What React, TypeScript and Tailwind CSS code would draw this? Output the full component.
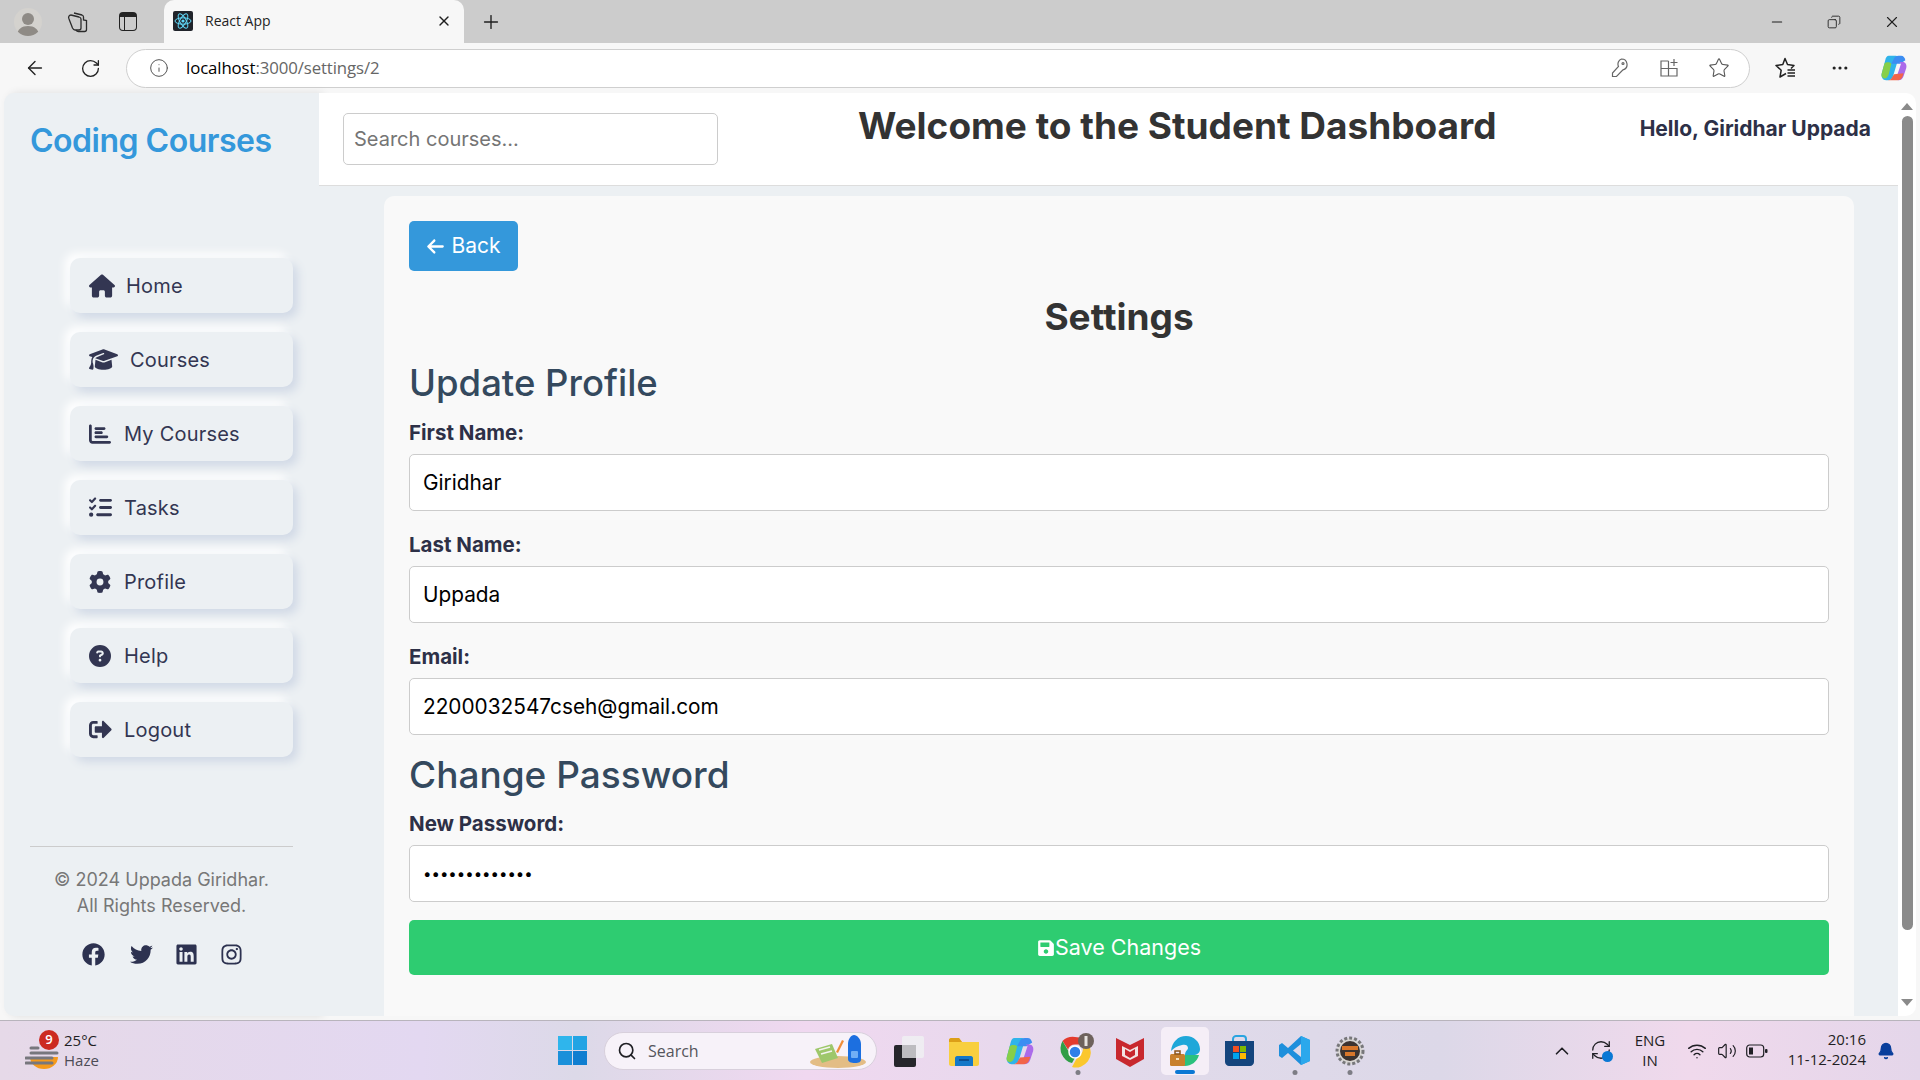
import type { ReactNode } from 'react';
import { ArrowLeft, RotateCw, Info, Star, Plus, X, Minus, Copy, Search, ChevronUp, Wifi, Volume2, Bell, MoreHorizontal, RefreshCw } from 'lucide-react';
import { FaFacebook, FaTwitter, FaLinkedin, FaInstagram, FaSave, FaSignOutAlt } from 'react-icons/fa';
import { FaArrowLeft, FaChartBar, FaCircleQuestion, FaGear, FaGraduationCap, FaHouse, FaListCheck } from 'react-icons/fa6';

const navItems = [
  { label: 'Home', icon: <FaHouse size={26} />, gap: 'gap-[11px]' },
  { label: 'Courses', icon: <FaGraduationCap size={29} />, gap: 'gap-[12px]' },
  { label: 'My Courses', icon: <FaChartBar size={22} />, gap: 'gap-[13px]' },
  { label: 'Tasks', icon: <FaListCheck size={23} />, gap: 'gap-[12px]' },
  { label: 'Profile', icon: <FaGear size={22} />, gap: 'gap-[13px]' },
  { label: 'Help', icon: <FaCircleQuestion size={22} />, gap: 'gap-[13px]' },
  { label: 'Logout', icon: <FaSignOutAlt size={23} />, gap: 'gap-[12px]' },
];

const ReactFavicon = () => (
  <svg width="20" height="20" viewBox="0 0 20 20">
    <rect width="20" height="20" rx="2" fill="#20232a" />
    <g fill="none" stroke="#61dafb" strokeWidth="1">
      <ellipse cx="10" cy="10" rx="8" ry="3.2" />
      <ellipse cx="10" cy="10" rx="8" ry="3.2" transform="rotate(60 10 10)" />
      <ellipse cx="10" cy="10" rx="8" ry="3.2" transform="rotate(120 10 10)" />
    </g>
    <circle cx="10" cy="10" r="1.6" fill="#61dafb" />
  </svg>
);

const CopilotLogo = ({ size }: { size: number }) => (
  <svg width={size} height={size} viewBox="0 0 32 32">
    <path d="M10 2h8c2 0 3 1 3 3l-6 20c-1 3-3 5-6 5H7c-4 0-6-4-5-8l4-15c.6-3 2-5 4-5z" fill="#2fb4ea" />
    <path d="M2 22l3-11c2-2 6-2 8 0l-3 12c-1 3-3 5-5 5-3-1-4-3-3-6z" fill="#86cf4a" />
    <path d="M13 11l3-6c1-2 3-3 5-3h3c3 0 4 2 5 5l-6 4z" fill="#3c8df2" />
    <path d="M22 9h4c3 0 5 3 4 7l-3 9c-1 3-3 5-6 5l-3-1 6-18z" fill="#ab6bea" />
    <path d="M9 30h11c3 0 5-2 6-5l1-3-11 1-3 5c-1 1-2 2-4 2z" fill="#f2654a" />
  </svg>
);

const Field = ({ label, value, type = 'text', top }: { label: string; value: string; type?: string; top: string }) => (
  <div className={top}>
    <label className="block text-[20.5px] leading-[24px] font-bold text-[#2d3047]">{label}</label>
    <input
      readOnly
      type={type}
      value={value}
      className={`mt-[9px] block h-[57px] w-full rounded-[5px] border border-[#cccccc] bg-white px-[13px] text-black outline-none ${type === 'password' ? 'text-[15px]' : 'text-[20.8px]'}`}
    />
  </div>
);

const TaskIcon = ({ children, width, dot }: { children: ReactNode; width: string; dot?: boolean }) => (
  <div className={`relative flex h-[59px] items-center justify-center ${width}`}>
    {children}
    {dot && <span className="absolute bottom-[5px] left-1/2 h-[5px] w-[5px] -translate-x-1/2 rounded-full bg-[#7d7d85]" />}
  </div>
);

const Taskbar = () => (
  <footer className="flex h-[60px] shrink-0 items-center border-t border-[#b8b4bc] bg-[linear-gradient(90deg,#e6d9e8,#e3d8f1_22%,#dcd9e8_30%,#f0d8f0_42%,#e0daea_62%,#dcd8e8_75%,#f0d9ec_88%,#e4d6ea)] font-['Open_Sans',sans-serif]">
    <div className="flex w-[558px] shrink-0 items-center pl-[25px]">
      <div className="relative h-[44px] w-[39px]">
        <svg width="40" height="44" viewBox="0 0 40 44" className="absolute left-0 top-0">
          <path d="M5 28h28a14 12 0 0 1-28 0z" fill="#f59a1c" />
          <path d="M6 15h7M6 20h26M1 25h26M1 30h26" stroke="#77777d" strokeWidth="3" strokeLinecap="round" transform="translate(0 4)" />
        </svg>
        <span className="absolute left-[14px] top-[1px] flex h-[20px] w-[20px] items-center justify-center rounded-full bg-[#cc2a20] text-[13px] font-semibold text-white">9</span>
      </div>
      <div className="-mt-[2px] text-[15px] leading-[20px] text-[#1f1f24]">
        <div>25°C</div>
        <div className="text-[#4c4c55]">Haze</div>
      </div>
    </div>

    <div className="flex items-center">
      <TaskIcon width="w-[29px]">
        <svg width="29" height="29" viewBox="0 0 29 29">
          <rect width="14" height="14" fill="#2fb5ec" />
          <rect x="15" width="14" height="14" fill="#22a4e4" />
          <rect y="15" width="14" height="14" fill="#1a90da" />
          <rect x="15" y="15" width="14" height="14" fill="#0f7ed0" />
        </svg>
      </TaskIcon>
      <div className="ml-[17px] flex h-[38px] w-[273px] items-center rounded-full border border-[#d8d0dc] bg-[#f7f2f9] pl-[12px] pr-[4px]">
        <Search size={20} strokeWidth={2} className="text-[#1f1f24]" />
        <span className="ml-[11px] text-[16px] text-[#55555c]">Search</span>
        <svg width="62" height="38" viewBox="0 0 62 38" className="ml-auto">
          <ellipse cx="28" cy="30" rx="28" ry="6" fill="#e3bd85" />
          <path d="M5 17l17-5 6 14-16 5z" fill="#9ec76b" />
          <path d="M9 18l11-3M11 22l11-3" stroke="#f4f4f0" strokeWidth="1.5" />
          <path d="M26 20l6-12 2 1-6 12z" fill="#ef8d3a" />
          <path d="M38 12c0-5 3-9 6-9s7 4 7 9v15c0 3-2 4-6 4s-7-1-7-4z" fill="#1c6fe0" />
          <rect x="41" y="19" width="7" height="7" rx="1" fill="#71aef5" />
        </svg>
      </div>
      <TaskIcon width="w-[32px] ml-[16px]">
        <svg width="32" height="32" viewBox="0 0 32 32">
          <rect x="1" y="10" width="22" height="22" rx="2" fill="#26262b" />
          <rect x="9" y="1" width="22" height="22" rx="2" fill="#f0eef2" opacity="0.9" />
          <rect x="9" y="10" width="14" height="13" fill="#bdbcc0" />
        </svg>
      </TaskIcon>
      <TaskIcon width="w-[32px] ml-[23px]">
        <svg width="32" height="30" viewBox="0 0 32 30">
          <path d="M1 4c0-1 1-2 2-2h8l3 4h17v22c0 1-1 2-2 2H3c-1 0-2-1-2-2z" fill="#f8cf3f" />
          <path d="M1 4c0-1 1-2 2-2h8l3 4H1z" fill="#dc9f18" />
          <path d="M9 20h14c1 0 2 1 2 2v8H7v-8c0-1 1-2 2-2z" fill="#1478c8" />
          <rect x="11" y="23" width="10" height="2" fill="#0c4f90" />
        </svg>
      </TaskIcon>
      <TaskIcon width="w-[30px] ml-[25px]">
        <CopilotLogo size={30} />
      </TaskIcon>
      <TaskIcon width="w-[37px] ml-[24px]" dot>
        <svg width="37" height="36" viewBox="0 0 37 36">
          <path d="M16 4a15 15 0 0 1 13 7.500H16a7.500 7.500 0 0 0-7 5L3.500 8A15 15 0 0 1 16 4z" fill="#e33b2e" />
          <path d="M3.500 8l6.500 11a7.500 7.500 0 0 0 7 4l-4 7A15 15 0 0 1 3.500 8z" fill="#2f9e46" />
          <path d="M29.500 11.500A15 15 0 0 1 13 34l6-11a7.500 7.500 0 0 0 3.500-11.500z" fill="#fbc72d" />
          <circle cx="16" cy="19" r="6" fill="#2f7fe8" stroke="#fff" strokeWidth="1.500" />
          <circle cx="27" cy="8" r="8" fill="#6e625c" />
          <path d="M27 3v10" stroke="#e8e3df" strokeWidth="3" />
        </svg>
      </TaskIcon>
      <TaskIcon width="w-[28px] ml-[20px]">
        <svg width="28" height="32" viewBox="0 0 28 32">
          <path d="M0 3l14 7 14-7v21l-14 8-14-8z" fill="#c8282e" />
          <path d="M6 11l8 4 8-4v10l-8 4-8-4z" fill="#f2e4e4" />
          <path d="M9 14l5 3 5-3v6l-5 3-5-3z" fill="#c8282e" />
        </svg>
      </TaskIcon>
      <div className="relative ml-[17px] flex h-[48px] w-[48px] items-center justify-center rounded-[5px] bg-[#f5eef7]">
        <svg width="32" height="32" viewBox="0 0 32 32">
          <path d="M2 16C3 7 9 1 17 1c8 0 14 6 14 13 0 4-3 6-7 6h-8c0-4 3-5 3-7 0-3-3-4-6-3-5 1-8 3-11 6z" fill="#1fa7d9" />
          <path d="M16 20h14c-2 7-8 11-14 11-2 0-4-1-5-2 3 0 5-4 5-9z" fill="#2bc17d" />
          <rect x="1" y="19" width="15" height="12" rx="1.500" fill="#c8802c" />
          <rect x="6" y="16" width="5" height="3" fill="none" stroke="#8a5418" strokeWidth="1.500" />
          <rect x="7" y="23" width="3" height="2" fill="#f4e2bf" />
        </svg>
        <span className="absolute bottom-[1px] left-1/2 h-[4px] w-[20px] -translate-x-1/2 rounded-full bg-[#0a78d4]" />
      </div>
      <TaskIcon width="w-[29px] ml-[16px]">
        <svg width="29" height="31" viewBox="0 0 29 31">
          <path d="M8 6V4c0-2 2-3 3-3h7c2 0 3 1 3 3v2" fill="none" stroke="#2aa4e0" strokeWidth="2" />
          <path d="M0 6h29v21c0 2-2 4-4 4H4c-2 0-4-2-4-4z" fill="#14457d" />
          <rect x="8" y="11" width="6" height="6" fill="#f25022" />
          <rect x="15" y="11" width="6" height="6" fill="#7fba00" />
          <rect x="8" y="18" width="6" height="6" fill="#00a4ef" />
          <rect x="15" y="18" width="6" height="6" fill="#ffb900" />
        </svg>
      </TaskIcon>
      <TaskIcon width="w-[31px] ml-[25px]" dot>
        <svg width="31" height="31" viewBox="0 0 31 31">
          <path d="M22 1l9 4v21l-9 4-13-12-6 5-3-2V10l3-2 6 5zM22 9l-8 6.500 8 6.500z" fill="#1e8fdc" />
          <path d="M22 1l9 4v21l-9 4z" fill="#2ba8ec" />
        </svg>
      </TaskIcon>
      <TaskIcon width="w-[30px] ml-[25px]" dot>
        <svg width="30" height="30" viewBox="0 0 30 30">
          <circle cx="15" cy="15" r="13" fill="#d8d6d4" stroke="#77777a" strokeWidth="3" strokeDasharray="3 2" />
          <circle cx="15" cy="15" r="10" fill="#3d3430" />
          <rect x="7" y="10" width="16" height="4" fill="#d8772a" />
          <rect x="10" y="16" width="10" height="4" fill="#d8772a" />
        </svg>
      </TaskIcon>
    </div>

    <div className="ml-auto flex items-center pr-[25px] text-[#1f1f24]">
      <ChevronUp size={22} strokeWidth={1.800} />
      <div className="relative ml-[17px] h-[24px] w-[22px]">
        <RefreshCw size={22} strokeWidth={1.400} />
        <span className="absolute bottom-[1px] right-[-1px] h-[11px] w-[11px] rounded-full bg-[#0a78d4]" />
      </div>
      <div className="-mt-[2px] ml-[20px] w-[36px] text-center text-[15px] leading-[20px]">
        <div>ENG</div>
        <div>IN</div>
      </div>
      <Wifi size={20} strokeWidth={1.700} className="ml-[19px]" />
      <Volume2 size={20} strokeWidth={1.400} className="ml-[10px]" />
      <svg width="22" height="14" viewBox="0 0 22 14" className="ml-[9px]">
        <rect x="0.700" y="1" width="17" height="12" rx="3" fill="none" stroke="#1f1f24" strokeWidth="1.200" />
        <rect x="3" y="3.500" width="4" height="7" fill="#1f1f24" />
        <rect x="19" y="5" width="2.500" height="4" rx="1" fill="#1f1f24" />
      </svg>
      <div className="-mt-[4px] ml-[14px] w-[84px] text-right text-[15px] leading-[20px]">
        <div>20:16</div>
        <div>11-12-2024</div>
      </div>
      <Bell size={18} fill="#0a3f9c" stroke="#0a3f9c" className="ml-[11px]" />
    </div>
  </footer>
);

const BrowserChrome = () => (
  <>
    <div className="flex h-[43px] shrink-0 items-end bg-[#cccccc] font-['Open_Sans',sans-serif] text-[#1f1f1f]">
      <div className="flex h-[43px] w-[164px] items-center pl-[14px]">
        <div className="flex h-[28px] w-[28px] items-end justify-center overflow-hidden rounded-full bg-[#d4d2ce]">
          <svg width="24" height="26" viewBox="0 0 24 26">
            <circle cx="12" cy="9" r="6" fill="#8f8b86" />
            <path d="M1 26c0-7 5-10 11-10s11 3 11 10z" fill="#8f8b86" />
          </svg>
        </div>
        <svg width="22" height="22" viewBox="0 0 22 22" className="ml-[24px]" fill="none" stroke="#2b2b2b" strokeWidth="1.300">
          <path d="M8 2l8 2c1 .3 1.500 1 1.500 2v3l3 .5v9c0 1-1 2-2 2h-6c-1 0-2-.5-2.500-1.500" />
          <path d="M5 4l8 2c1 .3 2 1 2 2v9c0 1-1 2-2 2H9c-1 0-2-1-2.500-2L3 8" />
          <path d="M3 8c-1-2 0-4 2-4" />
        </svg>
        <div className="ml-[31px] h-[19px] w-[18px] rounded-[4px] border-[1.5px] border-[#222] border-t-[5px]">
          <div className="h-full w-[5px] border-r-[1.5px] border-[#222]" />
        </div>
      </div>
      <div className="flex h-[43px] w-[300px] items-center rounded-t-[10px] bg-[#f7f7f7] pb-[2px] pl-[9px] pr-[12px]">
        <ReactFavicon />
        <span className="ml-[12px] text-[14px]">React App</span>
        <X size={16} strokeWidth={2} className="ml-auto" />
      </div>
      <div className="flex h-[43px] items-center pl-[16px]">
        <Plus size={22} strokeWidth={1.500} />
      </div>
      <div className="ml-auto flex h-[43px] items-center pr-[19px]">
        <Minus size={16} strokeWidth={1.600} />
        <Copy size={14} strokeWidth={1.500} className="ml-[42px] -scale-x-100" />
        <X size={18} strokeWidth={1.500} className="ml-[42px]" />
      </div>
    </div>

    <div className="flex h-[50px] shrink-0 items-center bg-[#f7f7f7] font-['Open_Sans',sans-serif]">
      <ArrowLeft size={22} strokeWidth={1.500} className="ml-[24px] text-[#222]" />
      <RotateCw size={21} strokeWidth={1.500} className="ml-[34px] text-[#222]" />
      <div className="ml-[25px] flex h-[39px] w-[1624px] items-center rounded-full border border-[#cfcfcf] bg-white pl-[22px] pr-[19px]">
        <Info size={20} strokeWidth={1.200} className="text-[#555]" />
        <span className="ml-[17px] text-[16.800px] tracking-[-0.1px] text-black">
          localhost<span className="text-[#666]">:3000/settings/2</span>
        </span>
        <svg width="18" height="20" viewBox="0 0 18 20" className="ml-auto" fill="none" stroke="#666" strokeWidth="1.200">
          <path d="M11.500 1a5.500 5.500 0 0 1 1.500 10.800L6.500 18.500H2.500v-3.500l6-6.500A5.500 5.500 0 0 1 11.500 1z" />
          <circle cx="13" cy="5.500" r="1" />
        </svg>
        <svg width="18" height="18" viewBox="0 0 18 18" className="ml-[32px]" fill="none" stroke="#666" strokeWidth="1.200">
          <path d="M8.500 2H1v15h16V9.500H1M8.500 2v15" />
          <path d="M14 0v7M10.500 3.500h7" />
        </svg>
        <Star size={22} strokeWidth={1.200} className="ml-[30px] text-[#555]" />
      </div>
      <svg width="22" height="22" viewBox="0 0 22 22" className="ml-[24px]" fill="none" stroke="#222" strokeWidth="1.500">
        <path d="M12 16.500L6 20l1.200-6.800L2 8.500l6.800-1L11 1.500l2.500 6 6.500 1-3 3" strokeLinejoin="round" />
        <path d="M13.500 13H21M13.500 16H21M13.500 19H21" />
      </svg>
      <MoreHorizontal size={20} strokeWidth={1.800} className="ml-[34px] text-[#222]" />
      <div className="ml-[30px]">
        <CopilotLogo size={28} />
      </div>
    </div>
  </>
);

const Sidebar = () => (
  <aside className="flex w-[315px] shrink-0 flex-col rounded-l-[10px] bg-[#ecf0f3] px-[26px] shadow-[4px_0_8px_rgba(0,0,0,0.1)]">
    <h1 className="mt-[27px] text-[32px] leading-[42px] font-semibold tracking-[-0.5px] text-[#3498db]">Coding Courses</h1>
    <nav className="ml-[40px] mt-[96px] flex flex-col gap-[19px]">
      {navItems.map((item) => (
        <a
          key={item.label}
          className={`flex h-[55px] w-[223px] items-center rounded-[10px] bg-[#ecf0f3] pl-[19px] text-[20px] tracking-[0.2px] text-[#333652] shadow-[5px_5px_10px_#d1d9e6,-5px_-5px_10px_#ffffff] ${item.gap}`}
        >
          {item.icon}
          <span>{item.label}</span>
        </a>
      ))}
    </nav>
    <div className="mt-auto mb-[50px] border-t border-[#ccc] pt-[20px] text-center text-[18px] leading-[26px] text-[#777]">
      <p>© 2024 Uppada Giridhar.<br />All Rights Reserved.</p>
      <div className="mt-[24px] flex items-center pl-[52px] text-[#2d3250]">
        <FaFacebook size={23} />
        <FaTwitter size={23} className="ml-[25px]" />
        <FaLinkedin size={23} className="ml-[22px]" />
        <FaInstagram size={23} className="ml-[22px]" />
      </div>
    </div>
  </aside>
);

const Scrollbar = () => (
  <div className="flex w-[18px] shrink-0 flex-col items-center rounded-r-[10px] bg-white pt-[10px]">
    <div className="h-0 w-0 border-x-[6px] border-b-[7px] border-x-transparent border-b-[#8a8a8a]" />
    <div className="mt-[6px] h-[814px] w-[11px] rounded-full bg-[#8a8a8a]" />
    <div className="mt-auto mb-[10px] h-0 w-0 border-x-[6px] border-t-[7px] border-x-transparent border-t-[#8a8a8a]" />
  </div>
);

export default function App() {
  return (
    <div className="flex h-screen w-[1920px] flex-col overflow-hidden bg-[#f7f7f7] font-['Inter',sans-serif]">
      <BrowserChrome />

      <div className="flex h-[927px] shrink-0 px-[4px] pb-[4px]">
        <Sidebar />
        <div className="flex min-w-0 flex-1 flex-col bg-[#ecf0f3]">
          <header className="flex h-[93px] shrink-0 items-start border-b border-[#dddddd] bg-white pl-[24px] pr-[27px]">
            <input
              readOnly
              placeholder="Search courses..."
              className="mt-[20px] h-[52px] w-[375px] rounded-[5px] border border-[#cccccc] bg-white px-[10px] text-[20px] outline-none placeholder:text-[#757575]"
            />
            <h2 className="ml-[140px] mt-[11px] text-[37px] leading-[44px] font-bold text-[#333333]">
              Welcome to the Student Dashboard
            </h2>
            <span className="ml-auto mt-[22px] text-[21px] leading-[28px] font-bold text-[#2d3047]">Hello, Giridhar Uppada</span>
          </header>
          <main className="flex-1 pl-[65px] pr-[44px] pt-[10px]">
            <div className="h-full rounded-t-[10px] bg-[#f9f9f9] px-[25px] pt-[25px]">
              <button className="flex h-[50px] w-[109px] items-center justify-center gap-[6px] rounded-[5px] bg-[#3498db] text-[21px] text-white">
                <FaArrowLeft size={19} />
                Back
              </button>
              <h2 className="mt-[25px] text-center text-[37px] leading-[42px] font-bold text-[#333333]">Settings</h2>
              <h3 className="mt-[23px] text-[36.500px] leading-[44px] font-medium text-[#34495e]">Update Profile</h3>
              <Field top="mt-[16px]" label="First Name:" value="Giridhar" />
              <Field top="mt-[22px]" label="Last Name:" value="Uppada" />
              <Field top="mt-[22px]" label="Email:" value="2200032547cseh@gmail.com" />
              <h3 className="mt-[18px] text-[37px] leading-[44px] font-medium text-[#34495e]">Change Password</h3>
              <Field top="mt-[15px]" label="New Password:" value="Giridhar@2004" type="password" />
              <button className="mt-[18px] flex h-[55px] w-full items-center justify-center rounded-[5px] bg-[#2ecc71] text-[21.500px] text-white">
                <FaSave size={18} />
                Save Changes
              </button>
            </div>
          </main>
        </div>
        <Scrollbar />
      </div>

      <Taskbar />
    </div>
  );
}
